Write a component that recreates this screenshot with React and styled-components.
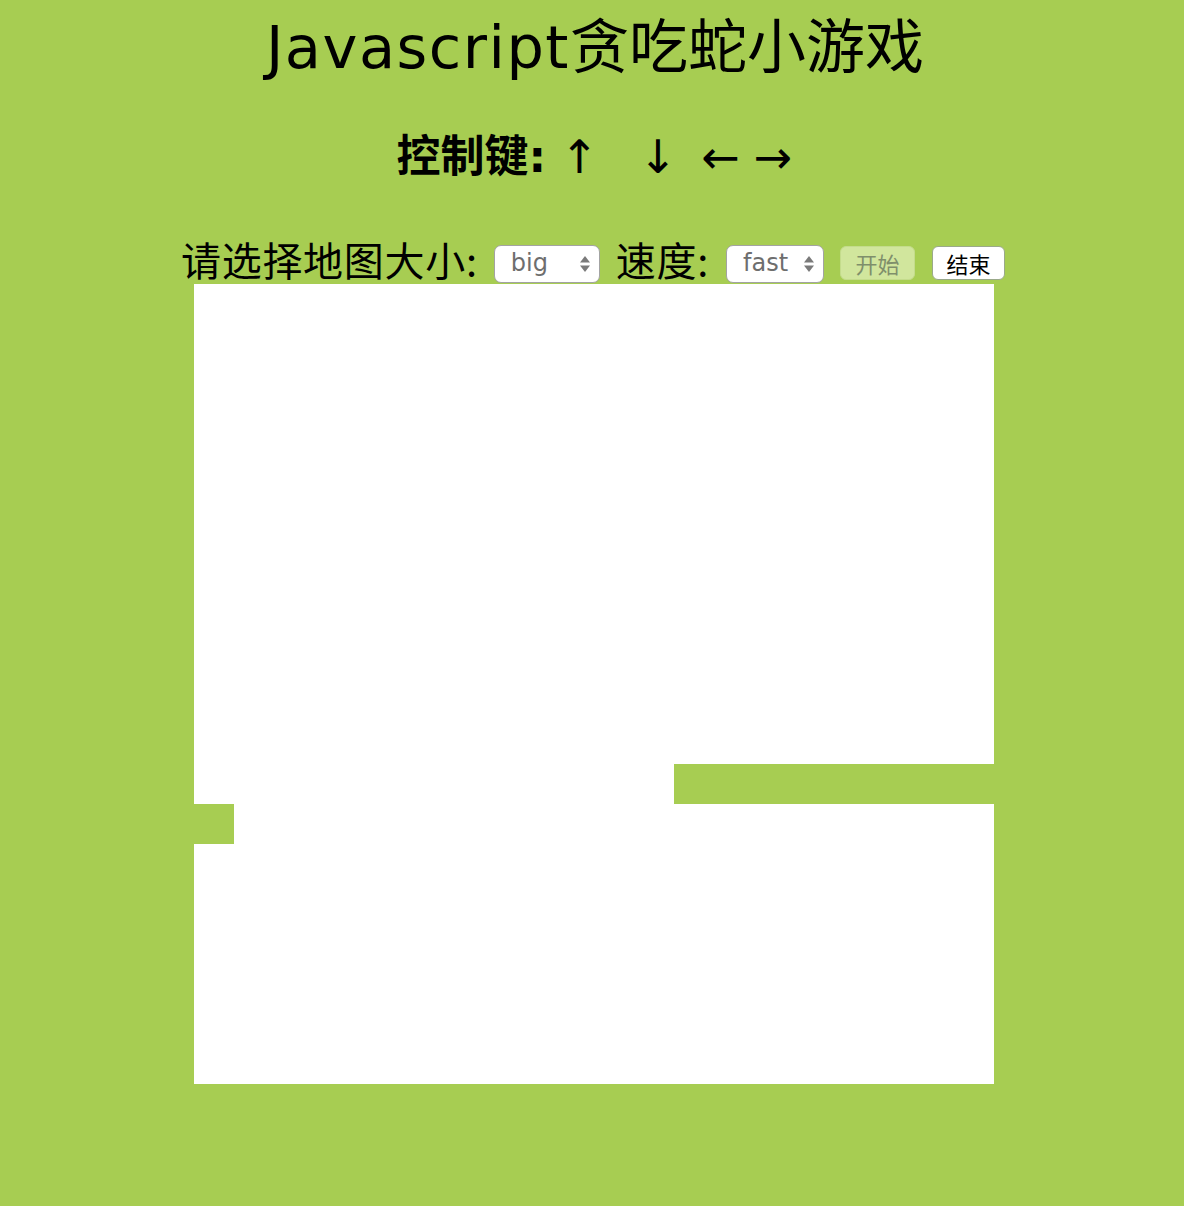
import React from "react";
import styled, { createGlobalStyle } from "styled-components";

const GREEN = "#a7cd52";

const Global = createGlobalStyle`
  html, body { margin: 0; padding: 0; background: ${GREEN}; }
  body { font-family: "DejaVu Sans", "Noto Sans CJK SC", sans-serif; color: #000; }
`;

const Page = styled.div`
  display: flex;
  flex-direction: column;
  align-items: center;
  padding-top: 14px;
  min-height: 1206px;
  box-sizing: border-box;
`;

const Title = styled.h1`
  margin: 0;
  font-family: "DejaVu Sans", "Noto Sans CJK SC", sans-serif;
  font-weight: normal;
  font-size: 59px;
  line-height: 68px;
  padding-left: 6px;
`;

const Latin = styled.span`
  letter-spacing: 1.5px;
`;

const Keys = styled.h2`
  margin: 47px 0 0;
  font-family: "DejaVu Sans", "Noto Sans CJK SC", sans-serif;
  font-weight: bold;
  font-size: 44px;
  line-height: 56px;
  display: flex;
  align-items: center;
  padding-left: 5px;
`;

const Arrow = styled.span`
  font-family: "DejaVu Sans", sans-serif;
  font-weight: normal;
  font-size: 46px;
  margin-left: ${(p) => p.$gap}px;
`;

const Controls = styled.div`
  margin-top: 49px;
  display: flex;
  align-items: center;
  height: 50px;
  padding-left: 2px;
`;

const Label = styled.span`
  font-family: "Noto Sans CJK SC", sans-serif;
  font-size: 40px;
  line-height: 50px;
  letter-spacing: 0.7px;
  margin-right: ${(p) => p.$mr || 0}px;
  margin-left: ${(p) => p.$ml || 0}px;
`;

const SelectWrap = styled.div`
  position: relative;
  width: ${(p) => p.$w}px;
  height: 38px;
  margin-top: 10px;
`;

const Select = styled.select`
  appearance: none;
  -webkit-appearance: none;
  width: 100%;
  height: 100%;
  box-sizing: border-box;
  border: 1px solid #a3a3a3;
  border-radius: 7px;
  background: #fff;
  color: #6e6e6e;
  font-family: "DejaVu Sans", sans-serif;
  font-size: 24px;
  padding: 0 0 2px 16px;
  outline: none;
`;

const Spinner = styled.svg`
  position: absolute;
  right: 8px;
  top: 10px;
  pointer-events: none;
`;

const Button = styled.button`
  height: 34px;
  width: ${(p) => p.$w}px;
  margin-left: ${(p) => p.$ml}px;
  margin-top: 8px;
  border: 1px solid ${(p) => (p.$disabled ? "#c4dc8c" : "#9aa98a")};
  border-radius: 6px;
  background: ${(p) => (p.$disabled ? "#d1e69d" : "#fff")};
  color: ${(p) => (p.$disabled ? "#7f8f6b" : "#000")};
  font-family: "Noto Sans CJK SC", sans-serif;
  font-size: 22px;
  line-height: 30px;
  padding: 0;
`;

const BoardWrap = styled.div`
  padding-left: 4px;
`;

const Board = styled.div`
  display: grid;
  grid-template-columns: repeat(20, 40px);
  grid-template-rows: repeat(20, 40px);
  background: #fff;
`;

const Cell = styled.div`
  background: ${(p) => (p.$on ? GREEN : "#fff")};
`;

const SpinIcon = () => (
  <Spinner width="14" height="18" viewBox="0 0 14 18">
    <path d="M7 1 L12 7.5 L2 7.5 Z" fill="#7a7a7a" />
    <path d="M7 17 L12 10.5 L2 10.5 Z" fill="#7a7a7a" />
  </Spinner>
);

const snake = new Set();
for (let c = 12; c < 20; c++) snake.add(`12-${c}`);
snake.add("13-0");

export default function App() {
  const cells = [];
  for (let r = 0; r < 20; r++) {
    for (let c = 0; c < 20; c++) {
      cells.push(<Cell key={`${r}-${c}`} $on={snake.has(`${r}-${c}`)} />);
    }
  }
  return (
    <>
      <Global />
      <Page>
        <Title>
          <Latin>Javascript</Latin>贪吃蛇小游戏
        </Title>
        <Keys>
          <span>控制键:</span>
          <Arrow $gap={14}>↑</Arrow>
          <Arrow $gap={40}>↓</Arrow>
          <Arrow $gap={24}>←</Arrow>
          <Arrow $gap={14}>→</Arrow>
        </Keys>
        <Controls>
          <Label $mr={16}>请选择地图大小:</Label>
          <SelectWrap $w={106}>
            <Select defaultValue="big">
              <option value="small">small</option>
              <option value="middle">middle</option>
              <option value="big">big</option>
            </Select>
            <SpinIcon />
          </SelectWrap>
          <Label $ml={16} $mr={17}>速度:</Label>
          <SelectWrap $w={98}>
            <Select defaultValue="fast">
              <option value="slow">slow</option>
              <option value="normal">normal</option>
              <option value="fast">fast</option>
            </Select>
            <SpinIcon />
          </SelectWrap>
          <Button $w={75} $ml={16} $disabled disabled>开始</Button>
          <Button $w={73} $ml={17}>结束</Button>
        </Controls>
        <BoardWrap>
          <Board>{cells}</Board>
        </BoardWrap>
      </Page>
    </>
  );
}
